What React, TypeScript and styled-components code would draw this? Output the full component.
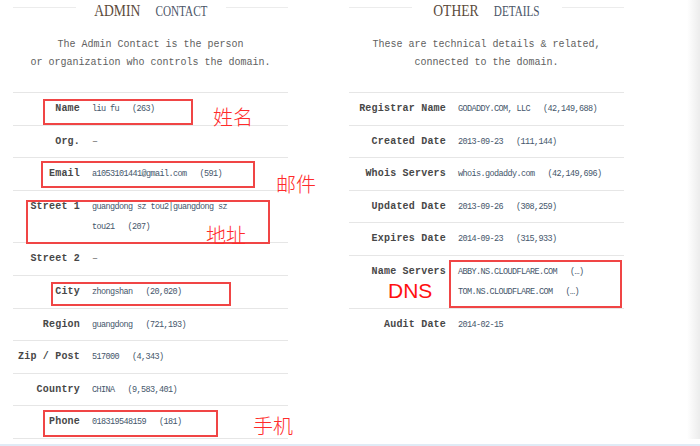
import React from "react";
import styled, { createGlobalStyle } from "styled-components";

const Global = createGlobalStyle`
  html, body { margin: 0; padding: 0; background: #fff; }
  body { font-family: "Liberation Mono", monospace; }
`;

const Page = styled.div`
  position: relative;
  width: 700px;
  height: 446px;
  display: flex;
  flex-direction: column;
  overflow: hidden;
`;

const Body = styled.div`
  flex: 1;
  display: flex;
`;

const Content = styled.div`
  flex: 1;
  display: grid;
  grid-template-columns: 275px 275px;
  column-gap: 61px;
  padding-left: 13px;
  align-content: start;
`;

const EdgeShade = styled.div`
  width: 13px;
  background: linear-gradient(to right, #ffffff, #ececec);
`;

const BottomStrip = styled.div`
  height: 3px;
  margin-top: 5px;
  background: #e0ebf6;
`;

const Column = styled.section`
  display: flex;
  flex-direction: column;
`;

const Title = styled.div`
  display: flex;
  align-items: flex-start;
  height: 22px;
`;

const Rule = styled.div`
  flex: 1;
  height: 1px;
  margin-top: 7px;
  background: #ececec;
`;

const TitleCenter = styled.div`
  width: 150px;
  display: flex;
  justify-content: center;
`;

const TitleText = styled.h2`
  margin: 0;
  display: inline-block;
  white-space: nowrap;
  font-family: "Liberation Serif", serif;
  font-weight: normal;
  line-height: 17px;
  transform: scaleX(0.8);
  transform-origin: center;
`;

const Big = styled.span`
  font-size: 17px;
  color: #5b4b3b;
`;

const Small = styled.span`
  font-size: 14px;
  color: #4a5567;
  margin-left: 19px;
`;

const Desc = styled.p`
  margin: 14px 0 0;
  text-align: center;
  font-family: "Liberation Mono", monospace;
  font-size: 10px;
  line-height: 18px;
  color: #616161;
`;

const Table = styled.div`
  margin-top: 20px;
  border-top: 1px solid #e6e6e6;
`;

const Row = styled.div<{ $labelWidth: number; $last?: boolean }>`
  display: grid;
  grid-template-columns: ${(p) => p.$labelWidth}px 1fr;
  column-gap: 12px;
  align-items: start;
  padding: 6px 0 5.6px;
  border-bottom: ${(p) => (p.$last ? "none" : "1px solid #e6e6e6")};
  line-height: 20px;
`;

const Label = styled.div`
  text-align: right;
  font-family: "Liberation Mono", monospace;
  font-weight: bold;
  font-size: 10px;
  letter-spacing: 0.2px;
  color: #474747;
  white-space: nowrap;
`;

const Value = styled.div`
  font-family: "Liberation Mono", monospace;
  font-size: 8.5px;
  letter-spacing: -0.6px;
  color: #45566b;
  white-space: nowrap;
`;

const Line = styled.div``;

const Count = styled.span`
  margin-left: 13px;
`;

const Dash = styled.span`
  font-size: 10px;
  color: #777;
  letter-spacing: 0;
`;

const Mark = styled.div<{ $x: number; $y: number; $w: number; $h: number }>`
  position: absolute;
  left: ${(p) => p.$x}px;
  top: ${(p) => p.$y}px;
  width: ${(p) => p.$w}px;
  height: ${(p) => p.$h}px;
  box-sizing: border-box;
  border: 2px solid #f04545;
  pointer-events: none;
`;

const Note = styled.div<{ $x: number; $y: number }>`
  position: absolute;
  left: ${(p) => p.$x}px;
  top: ${(p) => p.$y}px;
  font-family: "Noto Sans CJK SC", sans-serif;
  font-weight: 300;
  font-size: 20px;
  line-height: 20px;
  color: #ff2b2b;
  white-space: nowrap;
`;

const DnsNote = styled.div<{ $x: number; $y: number }>`
  position: absolute;
  left: ${(p) => p.$x}px;
  top: ${(p) => p.$y}px;
  font-family: "Liberation Sans", Arial, sans-serif;
  font-size: 21px;
  line-height: 22px;
  color: #ff1010;
`;

type Item = { label: string; lines: React.ReactNode[] };

const V = (text: string, count?: string) => (
  <>
    {text}
    {count && <Count>{count}</Count>}
  </>
);

const dash = <Dash>–</Dash>;

const admin: Item[] = [
  { label: "Name", lines: [V("liu fu", "(263)")] },
  { label: "Org.", lines: [dash] },
  { label: "Email", lines: [V("a1053101441@gmail.com", "(591)")] },
  {
    label: "Street 1",
    lines: [V("guangdong sz tou2|guangdong sz"), V("tou21", "(207)")],
  },
  { label: "Street 2", lines: [dash] },
  { label: "City", lines: [V("zhongshan", "(20,020)")] },
  { label: "Region", lines: [V("guangdong", "(721,193)")] },
  { label: "Zip / Post", lines: [V("517000", "(4,343)")] },
  { label: "Country", lines: [V("CHINA", "(9,583,401)")] },
  { label: "Phone", lines: [V("018319548159", "(181)")] },
];

const other: Item[] = [
  { label: "Registrar Name", lines: [V("GODADDY.COM, LLC", "(42,149,688)")] },
  { label: "Created Date", lines: [V("2013-09-23", "(111,144)")] },
  { label: "Whois Servers", lines: [V("whois.godaddy.com", "(42,149,696)")] },
  { label: "Updated Date", lines: [V("2013-09-26", "(308,259)")] },
  { label: "Expires Date", lines: [V("2014-09-23", "(315,933)")] },
  {
    label: "Name Servers",
    lines: [V("ABBY.NS.CLOUDFLARE.COM", "(…)"), V("TOM.NS.CLOUDFLARE.COM", "(…)")],
  },
  { label: "Audit Date", lines: [V("2014-02-15")] },
];

function Panel(props: {
  big: string;
  small: string;
  desc: React.ReactNode;
  items: Item[];
  labelWidth: number;
  lastOpen?: boolean;
}) {
  return (
    <Column>
      <Title>
        <Rule />
        <TitleCenter>
          <TitleText>
            <Big>{props.big}</Big>
            <Small>{props.small}</Small>
          </TitleText>
        </TitleCenter>
        <Rule />
      </Title>
      <Desc>{props.desc}</Desc>
      <Table>
        {props.items.map((it, i) => (
          <Row
            key={it.label}
            $labelWidth={props.labelWidth}
            $last={props.lastOpen && i === props.items.length - 1}
          >
            <Label>{it.label}</Label>
            <Value>
              {it.lines.map((l, j) => (
                <Line key={j}>{l}</Line>
              ))}
            </Value>
          </Row>
        ))}
      </Table>
    </Column>
  );
}

export default function App() {
  return (
    <Page>
      <Global />
      <Body>
        <Content>
          <Panel
            big="ADMIN"
            small="CONTACT"
            desc={
              <>
                The Admin Contact is the person
                <br />
                or organization who controls the domain.
              </>
            }
            items={admin}
            labelWidth={67}
          />
          <Panel
            big="OTHER"
            small="DETAILS"
            desc={
              <>
                These are technical details &amp; related,
                <br />
                connected to the domain.
              </>
            }
            items={other}
            labelWidth={97}
            lastOpen
          />
        </Content>
        <EdgeShade />
      </Body>
      <BottomStrip />

      <Mark $x={43} $y={99} $w={150} $h={26} />
      <Note $x={213} $y={107}>姓名</Note>
      <Mark $x={41} $y={161} $w={214} $h={27} />
      <Note $x={276} $y={174}>邮件</Note>
      <Mark $x={26} $y={200} $w={244} $h={44} />
      <Note $x={206} $y={225}>地址</Note>
      <Mark $x={51} $y={282} $w={180} $h={24} />
      <Mark $x={43} $y={410} $w={175} $h={27} />
      <Note $x={253} $y={416}>手机</Note>
      <Mark $x={449} $y={260} $w={173} $h={48} />
      <DnsNote $x={388} $y={280}>DNS</DnsNote>
    </Page>
  );
}
